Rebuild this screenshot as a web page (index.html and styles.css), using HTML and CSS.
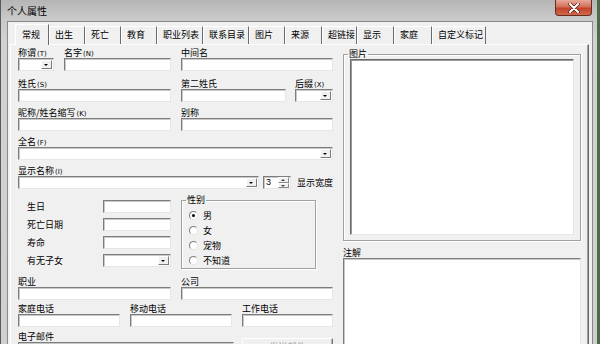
FILE: index.html
```html
<!DOCTYPE html>
<html>
<head>
<meta charset="utf-8">
<link rel="stylesheet" href="styles.css">
</head>
<body>
<div class="window">
  <div class="titlebar">
    <span class="title">个人属性</span>
    <div class="close"><svg width="14" height="10" viewBox="0 0 14 10"><path d="M3 1 L11 9 M11 1 L3 9" stroke="#5a1a10" stroke-width="3.4" stroke-linecap="round"/><path d="M3 1 L11 9 M11 1 L3 9" stroke="#fff" stroke-width="2" stroke-linecap="round"/></svg></div>
  </div>
  <div class="client">
    <div class="tabs">
      <div class="tab sel">常规</div>
      <div class="tab">出生</div>
      <div class="tab">死亡</div>
      <div class="tab">教育</div>
      <div class="tab">职业列表</div>
      <div class="tab">联系目录</div>
      <div class="tab">图片</div>
      <div class="tab">来源</div>
      <div class="tab">超链接</div>
      <div class="tab">显示</div>
      <div class="tab">家庭</div>
      <div class="tab">自定义标记</div>
    </div>
    <div class="panel">
      <div class="left">
        <div class="row r1">
          <div class="field w36"><label>称谓<span class="k">(T)</span></label><div class="tb combo"><i class="dd"></i></div></div>
          <div class="field w107"><label>名字<span class="k">(N)</span></label><div class="tb"></div></div>
          <div class="field w152"><label>中间名</label><div class="tb"></div></div>
        </div>
        <div class="row r2">
          <div class="field w153"><label>姓氏<span class="k">(S)</span></label><div class="tb"></div></div>
          <div class="field w105"><label>第二姓氏</label><div class="tb"></div></div>
          <div class="field w38 g9"><label>后缀<span class="k">(X)</span></label><div class="tb combo"><i class="dd"></i></div></div>
        </div>
        <div class="row">
          <div class="field w153"><label>昵称/姓名缩写<span class="k">(K)</span></label><div class="tb"></div></div>
          <div class="field w152"><label>别称</label><div class="tb"></div></div>
        </div>
        <div class="row">
          <div class="field w315"><label>全名<span class="k">(F)</span></label><div class="tb combo"><i class="dd"></i></div></div>
        </div>
        <div class="row r5">
          <div class="field w247"><label>显示名称<span class="k">(I)</span></label><div class="tb combo"><i class="dd"></i></div></div>
          <div class="tb spin"><span class="num">3</span><span class="arrows"><i class="up"></i><i class="down"></i></span></div>
          <span class="wlabel">显示宽度</span>
        </div>
        <div class="mid">
          <div class="dates">
            <div class="drow"><span>生日</span><div class="tb"></div></div>
            <div class="drow"><span>死亡日期</span><div class="tb"></div></div>
            <div class="drow"><span>寿命</span><div class="tb"></div></div>
            <div class="drow"><span>有无子女</span><div class="tb combo"><i class="dd"></i></div></div>
          </div>
          <fieldset class="sex">
            <legend>性别</legend>
            <div class="radio on"><i></i>男</div>
            <div class="radio"><i></i>女</div>
            <div class="radio"><i></i>宠物</div>
            <div class="radio"><i></i>不知道</div>
          </fieldset>
        </div>
        <div class="row r6">
          <div class="field w153"><label>职业</label><div class="tb"></div></div>
          <div class="field w152"><label>公司</label><div class="tb"></div></div>
        </div>
        <div class="row r7">
          <div class="field w102"><label>家庭电话</label><div class="tb"></div></div>
          <div class="field w102"><label>移动电话</label><div class="tb"></div></div>
          <div class="field w91"><label>工作电话</label><div class="tb"></div></div>
        </div>
        <div class="row r8">
          <div class="field w216"><label>电子邮件</label><div class="tb tall"></div></div>
          <div class="btn">发送邮件</div>
        </div>
      </div>
      <div class="right">
        <fieldset class="pic">
          <legend>图片</legend>
          <div class="picbox"></div>
        </fieldset>
        <label class="notelabel">注解</label>
        <div class="tb notes"></div>
      </div>
    </div>
  </div>
</div>
</body>
</html>
```
FILE: styles.css
```css
* { box-sizing: border-box; margin: 0; padding: 0; }
body {
  width: 600px; height: 359px; overflow: hidden; background: #fff;
  font-family: "Noto Sans CJK SC", "Noto Sans", sans-serif;
  font-size: 9px; color: #000;
}
.window {
  height: 344px; overflow: hidden;
  display: flex; flex-direction: column;
  background: linear-gradient(#b5b5b5, #c8c8c8 18px, #d2d2d2 40px, #cfcfcf);
  border-left: 1px solid #5a5a5a;
  border-right: 3px solid #4d6b4a;
  padding: 0 4px 0 6px;
}
.titlebar {
  height: 21px; flex: none;
  display: flex; align-items: flex-start;
}
.title { font-size: 10px; line-height: 12px; padding: 5px 0 0 0; color: #000; }
.close {
  margin-left: auto; margin-right: 1px;
  width: 37px; height: 16px;
  border: 1px solid #6b2a1e; border-top: none;
  border-radius: 0 0 4px 4px;
  background: linear-gradient(#e8a99a, #d2705a 45%, #c0432b 55%, #cf6a4c);
  display: flex; align-items: center; justify-content: center;
}
.client {
  flex: 1;
  background: #f0f0f0;
  border: 1px solid #8a8a8a; border-bottom: none;
  padding: 1px 3px 0 2px;
}
.tabs { display: flex; align-items: flex-end; padding-left: 5px; height: 21px; }
.tab {
  height: 18px; line-height: 16px;
  padding: 0 6px 0 5px;
  border-left: 1px solid #fff;
  border-right: 1px solid #6a6a6a;
  border-top: 1px solid #fff;
  white-space: nowrap;
}
.tab.sel { height: 21px; line-height: 20px; padding: 0 7px 0 6px; background: #f0f0f0; position: relative; z-index: 1; margin-bottom: -1px; }
.tabs .tab:nth-child(2) { width: 36px; }
.tabs .tab:nth-child(3), .tabs .tab:nth-child(4) { width: 36px; }
.tabs .tab:nth-child(5), .tabs .tab:nth-child(6) { width: 46px; }
.tabs .tab:nth-child(7) { width: 36px; }
.tabs .tab:nth-child(8) { width: 37px; }
.tabs .tab:nth-child(9) { width: 35px; }
.tabs .tab:nth-child(10) { width: 37px; }
.tabs .tab:nth-child(11) { width: 38px; }
.tabs .tab:nth-child(12) { width: 54px; }
.tab.sel { width: 34px; }
.panel {
  display: flex; gap: 10px;
  border: 1px solid #fff; border-right-color: #696969; border-bottom: none;
  box-shadow: inset -1px 0 #a0a0a0;
  height: 320px;
  padding: 3px 8px 0 7px;
}
.left { width: 315px; flex: none; }
.right { width: 238px; flex: none; display: flex; flex-direction: column; }
.row { display: flex; gap: 10px; align-items: flex-end; margin-top: 6px; }
.row.r1 { margin-top: 0; }
.row.r2 { margin-top: 8px; }
.field { display: flex; flex-direction: column; }
.field label, .notelabel { display: block; height: 10px; line-height: 10px; white-space: nowrap; }
.k { font-family: "DejaVu Sans", sans-serif; font-size: 7px; margin-left: 1px; }
.w36 { width: 36px; } .w107 { width: 107px; } .w152 { width: 152px; }
.w153 { width: 153px; } .w105 { width: 105px; } .w38 { width: 38px; }
.w315 { width: 315px; } .w247 { width: 247px; } .w102 { width: 102px; }
.w91 { width: 91px; } .w216 { width: 216px; }
.g9 { margin-left: -1px; }
.tb {
  height: 13px; background: #fff;
  border: 1px solid; border-color: #7d7d7d #e6e6e6 #e6e6e6 #7d7d7d;
  box-shadow: inset 1px 1px #c8c8c8;
}
.combo { display: flex; justify-content: flex-end; padding: 1px; }
.dd {
  width: 11px; height: 9px; margin: 0 0 0 auto;
  background: #f0f0f0;
  border: 1px solid; border-color: #fff #7a7a7a #7a7a7a #fff;
  position: relative;
}
.dd::after {
  content: ""; position: absolute; left: 2px; top: 3px;
  border-left: 2.5px solid transparent; border-right: 2.5px solid transparent;
  border-top: 2.5px solid #000;
}
.r5 { gap: 0; }
.spin { width: 28px; flex: none; margin-left: 4px; display: flex; justify-content: space-between; padding: 0 1px 0 2px; }
.num { font-family: "Liberation Sans", sans-serif; font-size: 9px; line-height: 11px; }
.arrows { width: 11px; display: flex; flex-direction: column; background: #f0f0f0; }
.arrows i { flex: 1; position: relative; border: 1px solid; border-color: #fff #8a8a8a #8a8a8a #fff; }
.arrows .up::after { content: ""; position: absolute; left: 2px; top: 1px; border-left: 2px solid transparent; border-right: 2px solid transparent; border-bottom: 2px solid #444; }
.arrows .down::after { content: ""; position: absolute; left: 2px; top: 1px; border-left: 2px solid transparent; border-right: 2px solid transparent; border-top: 2px solid #444; }
.wlabel { margin-left: 6px; line-height: 12px; white-space: nowrap; flex: none; }
.mid { display: flex; margin-top: 11px; gap: 10px; align-items: flex-start; }
.dates { width: 153px; display: flex; flex-direction: column; gap: 5px; }
.drow { display: flex; align-items: center; justify-content: space-between; padding-left: 9px; }
.drow span { line-height: 13px; }
.drow .tb { width: 68px; }
fieldset {
  border: 1px solid #a0a0a0;
  box-shadow: inset 1px 1px #fff, 1px 1px #fff;
  min-width: 0;
}
legend { line-height: 10px; padding: 0 1px; }
.sex { width: 135px; height: 74px; margin-top: -5px; padding: 3px 0 0 7px; }
.sex legend { margin-left: -3px; }
.radio { display: flex; align-items: center; height: 15px; gap: 5px; line-height: 12px; }
.radio i {
  width: 9px; height: 9px; border-radius: 50%;
  border: 1px solid; border-color: #7d7d7d #e6e6e6 #e6e6e6 #7d7d7d;
  background: #fff; position: relative;
}
.radio.on i::after { content: ""; position: absolute; left: 2px; top: 2px; width: 3px; height: 3px; border-radius: 50%; background: #000; }
.r6 { margin-top: 8px; }
.r7 { margin-top: 4px; }
.r8 { margin-top: 5px; gap: 8px; align-items: flex-start; }
.tall { height: 20px; }
.btn {
  width: 91px; height: 22px; margin-top: 6px;
  border: 1px solid; border-color: #fff #7a7a7a #7a7a7a #fff;
  box-shadow: inset -1px -1px #b0b0b0;
  color: #a0a0a0; text-align: center; line-height: 16px;
}
.pic { display: block; width: 238px; margin-top: 1px; padding: 0 6px 5px 6px; }
.pic legend { margin-left: -2px; }
.picbox {
  height: 176px; background: #fff;
  border: 1px solid; border-color: #6a6a6a #e6e6e6 #e6e6e6 #6a6a6a;
  box-shadow: inset 1px 1px #9a9a9a;
}
.notelabel { margin-top: 7px; }
.notes { height: 100px; }
```
